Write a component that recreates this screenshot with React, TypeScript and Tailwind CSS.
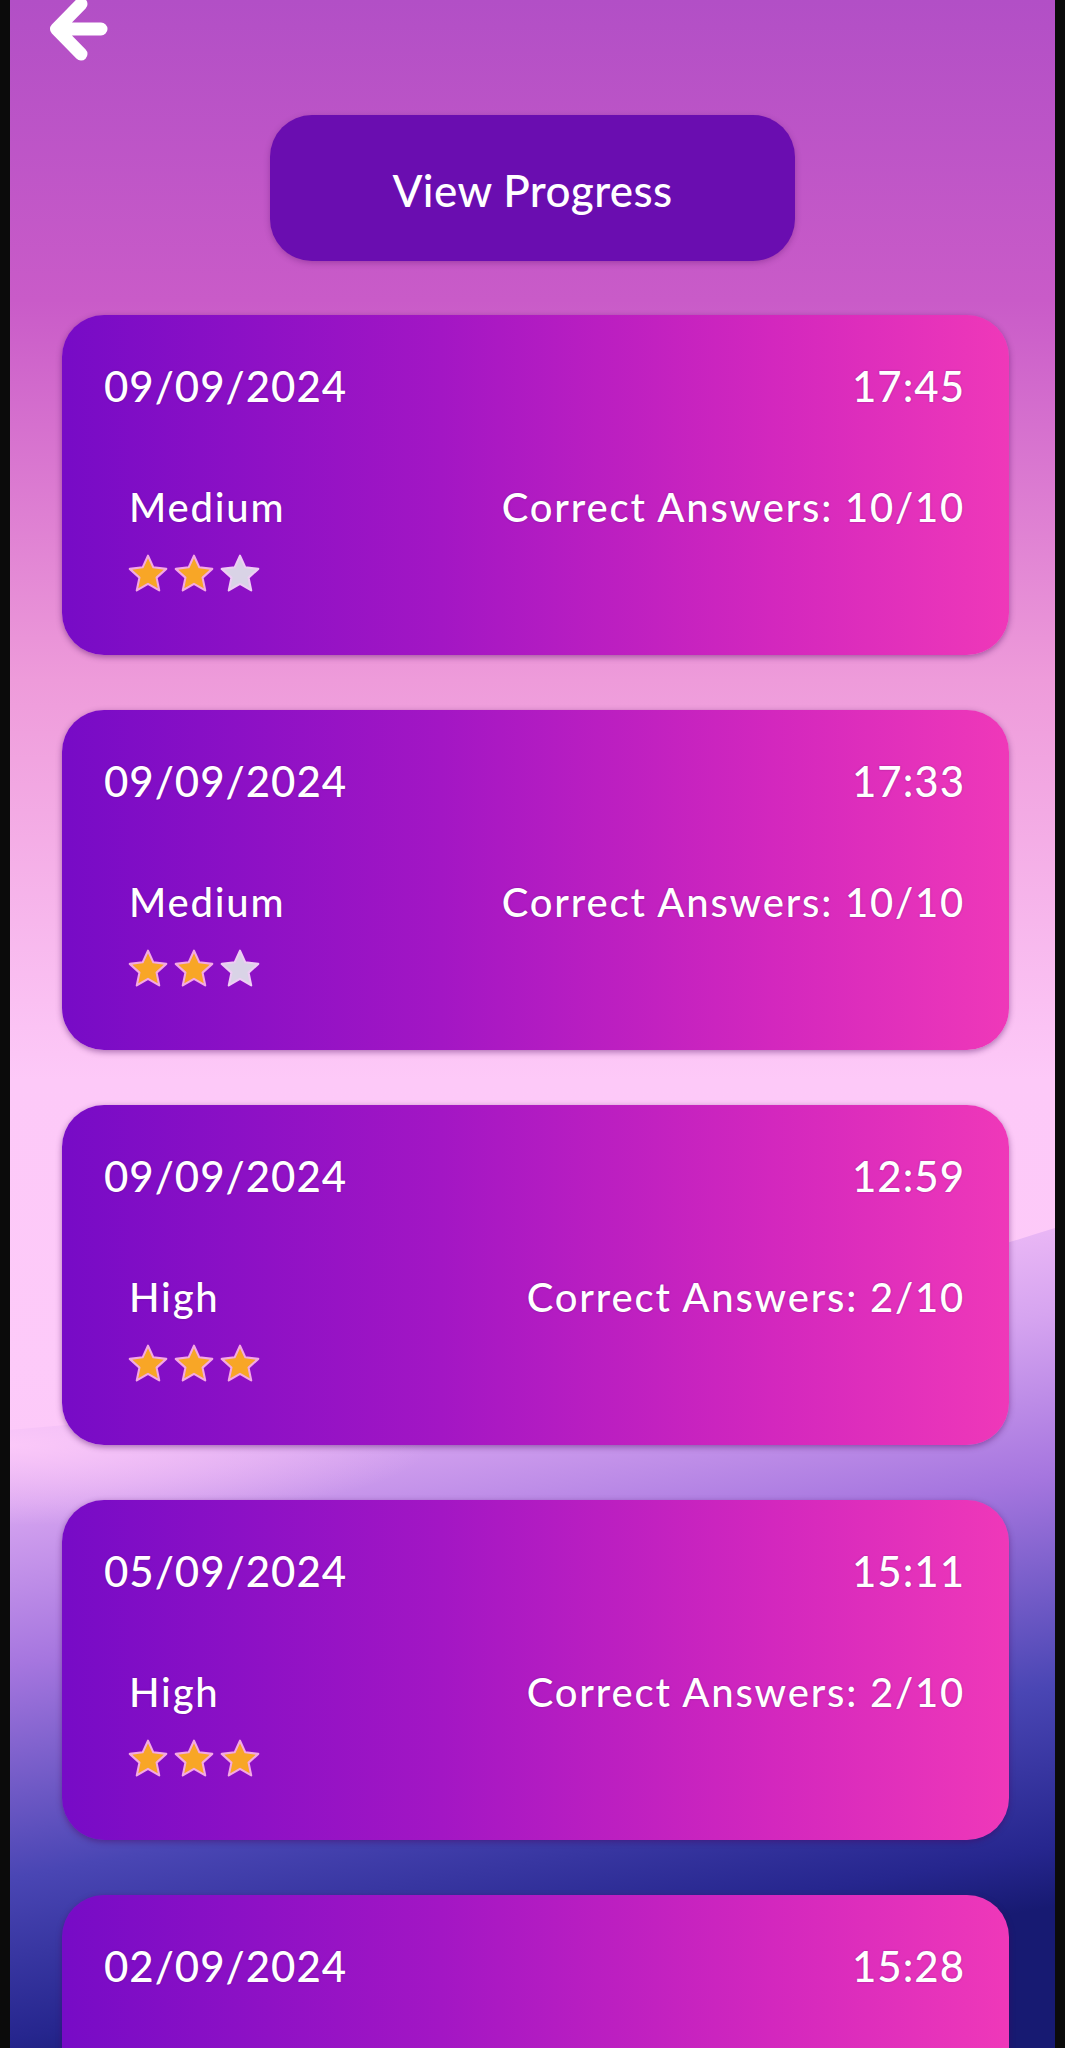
import React from 'react';

interface Attempt {
  date: string;
  time: string;
  level: string;
  correct: number;
  stars: number;
}

const attempts: Attempt[] = [
  { date: '09/09/2024', time: '17:45', level: 'Medium', correct: 10, stars: 2 },
  { date: '09/09/2024', time: '17:33', level: 'Medium', correct: 10, stars: 2 },
  { date: '09/09/2024', time: '12:59', level: 'High', correct: 2, stars: 3 },
  { date: '05/09/2024', time: '15:11', level: 'High', correct: 2, stars: 3 },
  { date: '02/09/2024', time: '15:28', level: 'High', correct: 2, stars: 3 },
];

const Star: React.FC<{ on: boolean }> = ({ on }) => (
  <svg width="40" height="40" viewBox="1.5 1.5 21 21" className="block">
    <polygon
      points="12,2.4 14.8,8.5 21.6,9.3 16.5,13.9 17.9,20.6 12,17.2 6.1,20.6 7.5,13.9 2.4,9.3 9.2,8.5"
      fill={on ? '#f8a626' : '#d9d3e6'}
      stroke={on ? '#f4a9e4' : '#eecdf4'}
      strokeWidth="1.1"
      strokeLinejoin="round"
    />
  </svg>
);

const AttemptCard: React.FC<{ item: Attempt }> = ({ item }) => (
  <div className="h-[340px] shrink-0 rounded-[42px] bg-[linear-gradient(90deg,#770bc6_0%,#a316c4_40%,#d327be_75%,#ef38b9_100%)] pl-[42px] pr-[44px] pt-[50px] font-medium text-white shadow-[0_2px_6px_rgba(70,0,90,0.45)] [text-shadow:0_0_2px_rgba(70,0,90,0.45)]">
    <div className="flex justify-between text-[42px] leading-none tracking-[1px]">
      <span>{item.date}</span>
      <span>{item.time}</span>
    </div>
    <div className="mt-[80px] flex justify-between pl-[25px] text-[40px] leading-none tracking-[1.8px]">
      <span>{item.level}</span>
      <span>Correct Answers: {item.correct}/10</span>
    </div>
    <div className="mt-[27px] flex gap-[6px] pl-[24px]">
      {[0, 1, 2].map((i) => (
        <Star key={i} on={i < item.stars} />
      ))}
    </div>
  </div>
);

export default function App() {
  return (
    <div className="h-[2048px] w-full overflow-hidden bg-[#0b0b0b] px-[10px] font-['Lato',sans-serif]">
      <div className="relative h-[2048px] overflow-hidden bg-[linear-gradient(180deg,#b24fc6_0px,#c95bc8_300px,#ee9bda_680px,#fdc9f8_1080px,#fdcaf9_1400px)]">
        {/* bottom wave */}
        <svg
          className="pointer-events-none absolute left-0 top-[1100px]"
          width="1045"
          height="948"
          viewBox="0 0 1045 948"
        >
          <defs>
            <linearGradient id="wave" gradientUnits="userSpaceOnUse" x1="0" y1="150" x2="150" y2="970">
              <stop offset="0.16" stopColor="#fbc8f9" />
              <stop offset="0.2" stopColor="#e9b6f5" />
              <stop offset="0.3" stopColor="#d6a4f0" />
              <stop offset="0.49" stopColor="#a676df" />
              <stop offset="0.74" stopColor="#4a46b4" />
              <stop offset="0.93" stopColor="#26268e" />
              <stop offset="1" stopColor="#171a72" />
            </linearGradient>
            <radialGradient id="soft" cx="0.5" cy="0.5" r="0.5">
              <stop offset="0" stopColor="#fcc9f9" stopOpacity="0.95" />
              <stop offset="1" stopColor="#fcc9f9" stopOpacity="0" />
            </radialGradient>
          </defs>
          <path d="M0,330 C360,300 740,225 1045,128 L1045,948 L0,948 Z" fill="url(#wave)" />
          <ellipse cx="0" cy="345" rx="420" ry="80" fill="url(#soft)" />
        </svg>

        <div className="relative">
          <svg width="80" height="62" viewBox="0 0 80 62" className="ml-[28px] block">
            <path
              d="M43,4 L18.5,29 L43,54 M18.5,29 L63,29"
              fill="none"
              stroke="#ffffff"
              strokeWidth="13"
              strokeLinecap="round"
              strokeLinejoin="round"
            />
          </svg>

          <button className="mx-auto mt-[53px] flex h-[146px] w-[525px] items-center justify-center rounded-[42px] bg-[#6a0db0] pt-[4px] text-[44px] font-medium tracking-[0.4px] text-white shadow-[0_2px_6px_rgba(70,0,90,0.3)]">
            View Progress
          </button>

          <div className="mt-[54px] flex flex-col gap-[55px] pl-[52px] pr-[46px]">
            {attempts.map((a, i) => (
              <AttemptCard key={i} item={a} />
            ))}
          </div>
        </div>
      </div>
    </div>
  );
}
